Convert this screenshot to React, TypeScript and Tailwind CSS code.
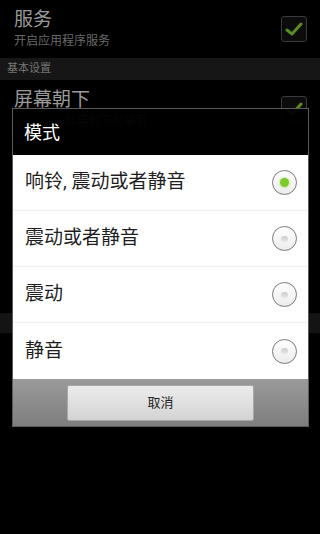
const OPTIONS = ['响铃, 震动或者静音', '震动或者静音', '震动', '静音']

const FONT = 'font-["Roboto","Noto_Sans_CJK_SC",sans-serif]'

function CheckBox() {
  return (
    <div className="flex h-[26px] w-[26px] items-center justify-center rounded-[3px] border border-[#3a3a3a] bg-[#0c0c0c]">
      <svg width="18" height="16" viewBox="0 0 18 16">
        <path d="M2 9 L7 13 L16 3" fill="none" stroke="#5c8a1e" strokeWidth="3" strokeLinecap="round" strokeLinejoin="round" />
      </svg>
    </div>
  )
}

function Radio({ checked }: { checked: boolean }) {
  return (
    <div className="flex h-[25px] w-[25px] items-center justify-center rounded-full border-[1.5px] border-[#7a7a7a] bg-gradient-to-b from-[#ffffff] to-[#ececec]">
      {checked ? (
        <div className="h-[9px] w-[9px] rounded-full bg-[#7ccb2a] shadow-[0_0_3px_#a6e05a]" />
      ) : (
        <div className="h-[6px] w-[7px] rounded-full bg-gradient-to-b from-[#d0d0d0] to-[#e4e4e4]" />
      )}
    </div>
  )
}

export default function App() {
  return (
    <div className={`relative h-[534px] w-[320px] overflow-hidden bg-black ${FONT}`}>
      {/* dimmed settings behind the dialog */}
      <div className="flex flex-col">
        <div className="flex items-center justify-between pl-[14px] pr-[13px] pt-[8px] pb-[8px]">
          <div className="flex flex-col">
            <span className="text-[19px] leading-[24px] text-[#9a9a9a]">服务</span>
            <span className="text-[12px] leading-[18px] text-[#6a6a6a]">开启应用程序服务</span>
          </div>
          <CheckBox />
        </div>
        <div className="h-[22px] bg-[#161616] pl-[7px] text-[11px] leading-[22px] text-[#777]">基本设置</div>
        <div className="flex items-center justify-between pl-[14px] pr-[13px] pt-[8px] pb-[8px]">
          <div className="flex flex-col">
            <span className="text-[19px] leading-[24px] text-[#9a9a9a]">屏幕朝下</span>
            <span className="pl-[50px] text-[12px] leading-[18px] text-[#6a6a6a]">屏幕朝下时静音</span>
          </div>
          <CheckBox />
        </div>
        <div className="h-[175px]" />
        <div className="h-[20px] bg-[#141414]" />
      </div>

      {/* dialog */}
      <div className="absolute left-[12px] top-[108px] flex w-[297px] flex-col border border-[#5a5a5a]">
        <div className="flex h-[46px] items-center bg-black/95 pl-[11px] text-[18px] text-white">模式</div>
        <div className="flex flex-col bg-white">
          {OPTIONS.map((opt, i) => (
            <div
              key={opt}
              className={`flex h-[56px] items-center justify-between pl-[12px] pr-[11px] ${i < OPTIONS.length - 1 ? 'border-b border-[#f0f0f0]' : ''}`}
            >
              <span className="text-[19px] text-[#1e1e1e]">{opt}</span>
              <Radio checked={i === 0} />
            </div>
          ))}
        </div>
        <div className="flex h-[47px] items-center justify-center bg-gradient-to-b from-[#9a9a9a] to-[#7e7e7e]">
          <button className="h-[36px] w-[187px] rounded-[2px] border border-[#a8a8a8] bg-gradient-to-b from-[#ececec] to-[#d3d3d3] text-[13px] text-[#222]">
            取消
          </button>
        </div>
      </div>
    </div>
  )
}
